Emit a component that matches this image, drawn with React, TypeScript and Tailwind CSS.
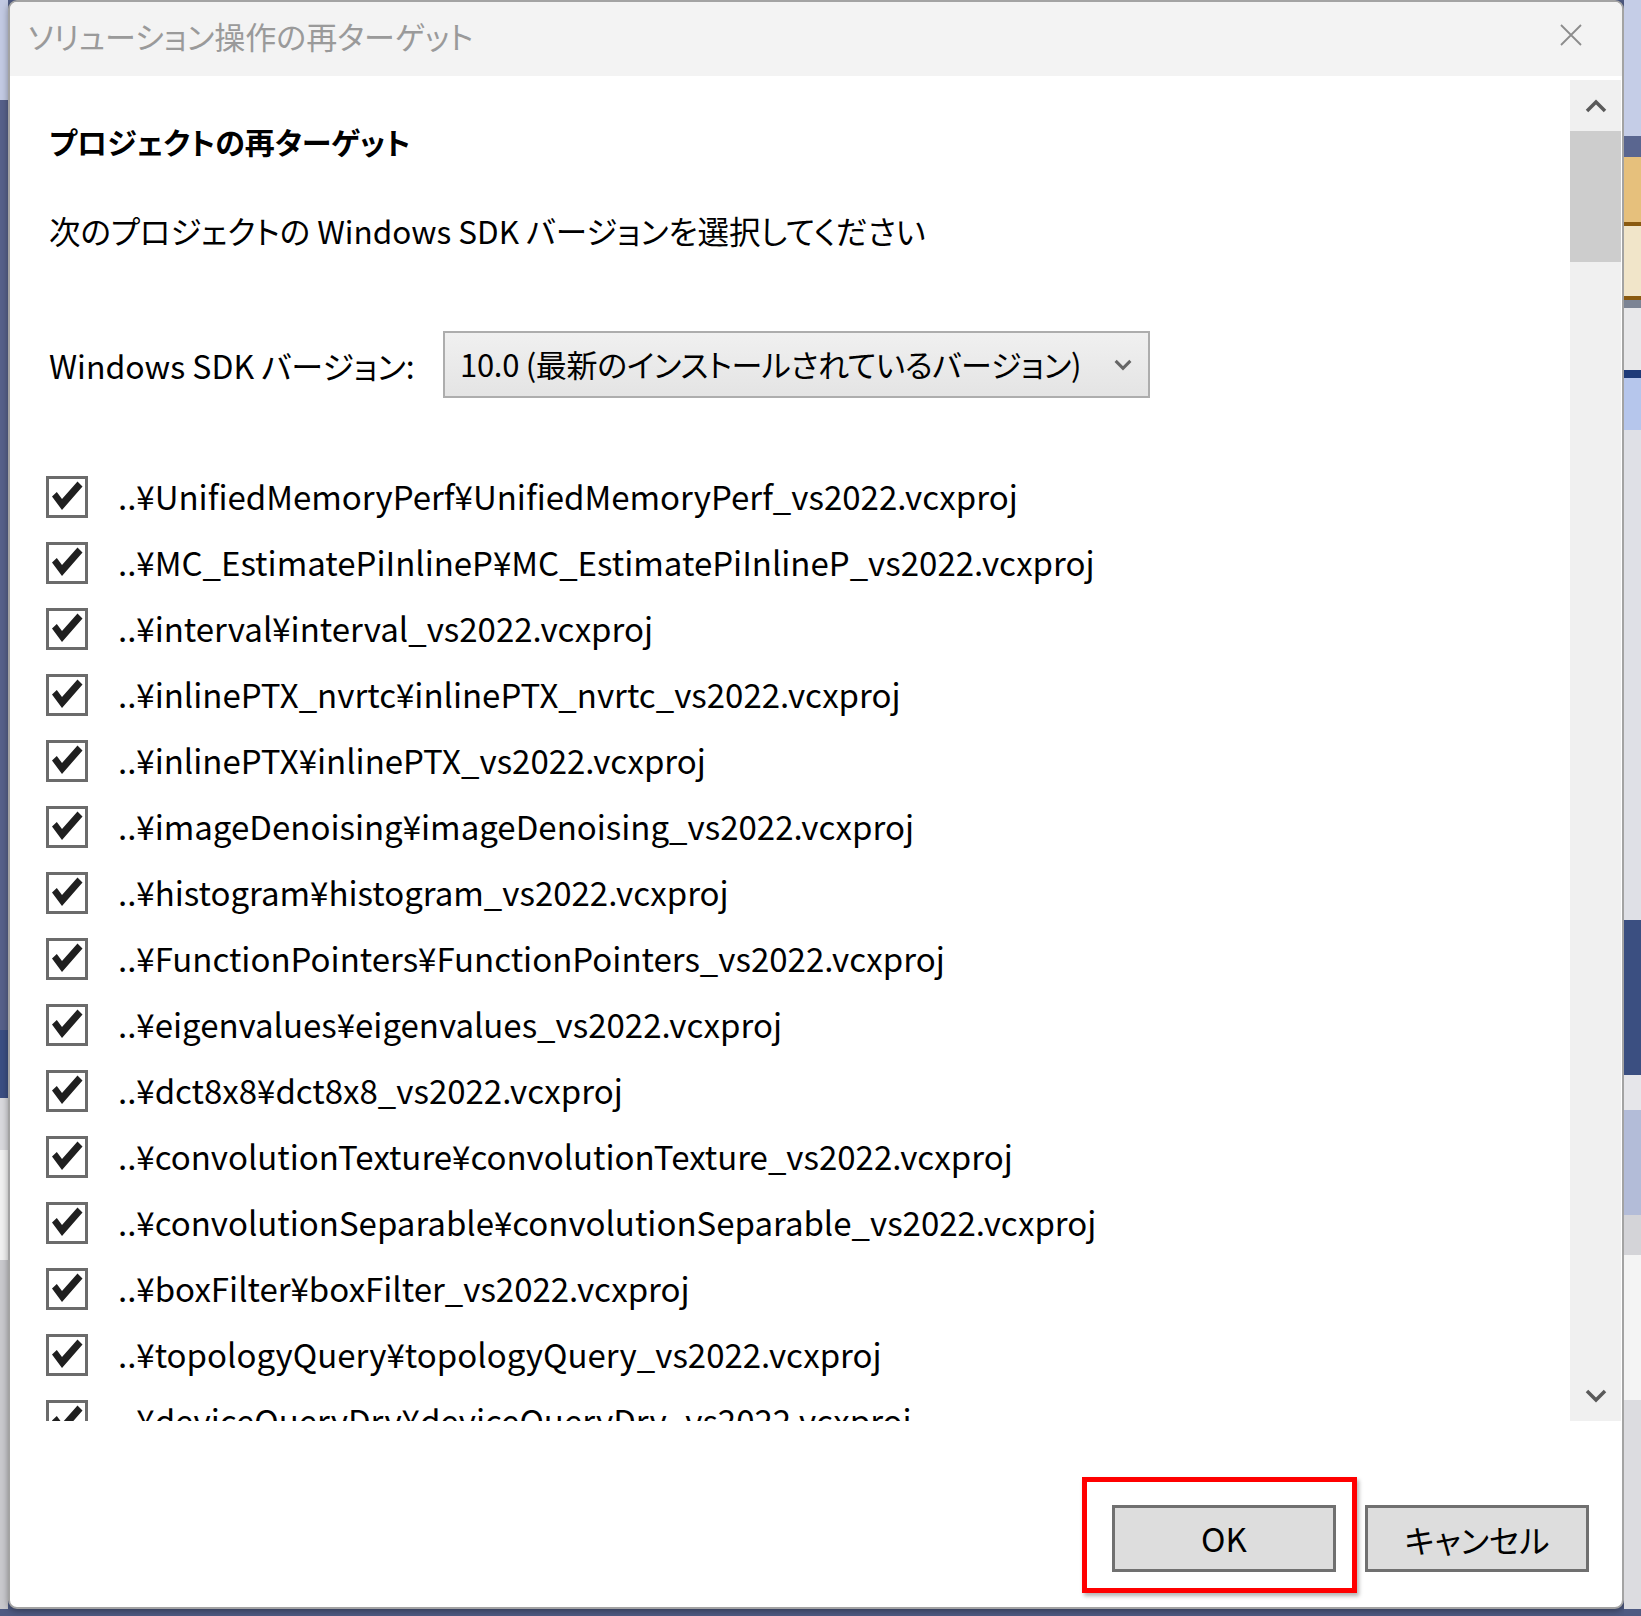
import React from 'react';

const files = [
    '..¥UnifiedMemoryPerf¥UnifiedMemoryPerf_vs2022.vcxproj',
    '..¥MC_EstimatePiInlineP¥MC_EstimatePiInlineP_vs2022.vcxproj',
    '..¥interval¥interval_vs2022.vcxproj',
    '..¥inlinePTX_nvrtc¥inlinePTX_nvrtc_vs2022.vcxproj',
    '..¥inlinePTX¥inlinePTX_vs2022.vcxproj',
    '..¥imageDenoising¥imageDenoising_vs2022.vcxproj',
    '..¥histogram¥histogram_vs2022.vcxproj',
    '..¥FunctionPointers¥FunctionPointers_vs2022.vcxproj',
    '..¥eigenvalues¥eigenvalues_vs2022.vcxproj',
    '..¥dct8x8¥dct8x8_vs2022.vcxproj',
    '..¥convolutionTexture¥convolutionTexture_vs2022.vcxproj',
    '..¥convolutionSeparable¥convolutionSeparable_vs2022.vcxproj',
    '..¥boxFilter¥boxFilter_vs2022.vcxproj',
    '..¥topologyQuery¥topologyQuery_vs2022.vcxproj',
    '..¥deviceQueryDrv¥deviceQueryDrv_vs2022.vcxproj',
];

const Chevron: React.FC<{ up?: boolean; className?: string; width?: string }> = ({ up, className, width = '3.5' }) => (
    <svg viewBox="0 0 22 16" className={className}>
        <path
            d={up ? 'M2 13 L11 4 L20 13' : 'M2 3 L11 12 L20 3'}
            fill="none"
            stroke="currentColor"
            strokeWidth={width}
        />
    </svg>
);

const CheckBox: React.FC = () => (
    <div className="w-[42px] h-[42px] border-[3px] border-[#6b6b6b] bg-white flex items-center justify-center shrink-0">
        <svg viewBox="0 0 34 34" className="w-[34px] h-[34px]">
            <path d="M2 16.5 L6.8 12 L12 19 L27.5 1.5 L32.5 6.5 L12 30 Z" fill="#1f1f1f" />
        </svg>
    </div>
);

const LeftStrip: React.FC = () => (
    <div className="w-[8px] flex flex-col shrink-0">
        <div className="h-[100px] bg-[#c2c9e2]" />
        <div className="h-[930px] bg-[#566089]" />
        <div className="h-[68px] bg-[#3b4e82]" />
        <div className="h-[52px] bg-[#d8d8dc]" />
        <div className="h-[110px] bg-[#f0f0f0]" />
        <div className="h-[349px] bg-[#c8c8cc]" />
        <div className="flex-1 bg-[#4e5a82]" />
    </div>
);

const RightStrip: React.FC = () => (
    <div className="w-[17px] flex flex-col shrink-0">
        <div className="h-[136px] bg-[#c5cde7]" />
        <div className="h-[21px] bg-[#5a6690]" />
        <div className="h-[65px] bg-[#e6c07c]" />
        <div className="h-[4px] bg-[#8a5a10]" />
        <div className="h-[70px] bg-[#f1e5c9]" />
        <div className="h-[4px] bg-[#8a5a10]" />
        <div className="h-[8px] bg-[#7c8494]" />
        <div className="h-[62px] bg-[#e8e8ea]" />
        <div className="h-[8px] bg-[#1e3a78]" />
        <div className="h-[52px] bg-[#b6c6ec]" />
        <div className="h-[490px] bg-[#dfe0e6]" />
        <div className="h-[155px] bg-[#3b4f81]" />
        <div className="h-[35px] bg-[#e6e6ea]" />
        <div className="h-[105px] bg-[#b3bcd8]" />
        <div className="h-[40px] bg-[#d4d4d8]" />
        <div className="h-[145px] bg-[#f4f4f4]" />
        <div className="h-[209px] bg-[#dcdce0]" />
        <div className="flex-1 bg-[#4e5a82]" />
    </div>
);

export default function App() {
    return (
        <div className="w-[1641px] h-[1616px] flex overflow-hidden bg-[#4e5a82] font-['Noto_Sans_CJK_JP',sans-serif] [font-feature-settings:'palt'] text-black">
            <LeftStrip />
            <div className="w-[1616px] h-[1609px] shrink-0 flex flex-col bg-white border-2 border-[#a3a3a3] rounded-[9px] overflow-hidden shadow-[0_2px_6px_rgba(0,0,0,0.35)]">
                {/* title bar */}
                <div className="h-[74px] bg-[#f3f3f3] flex items-center justify-between pl-[18px] pr-[40px] pb-[8px] shrink-0">
                    <span className="text-[31px] text-[#9a9a9a] leading-none whitespace-nowrap">ソリューション操作の再ターゲット</span>
                    <svg viewBox="0 0 22 22" className="w-[22px] h-[22px]">
                        <path d="M1 1 L21 21 M21 1 L1 21" stroke="#8c8c8c" strokeWidth="1.8" />
                    </svg>
                </div>

                {/* scrollable body */}
                <div className="h-[1341px] mt-[4px] flex shrink-0">
                    <div className="flex-1 overflow-hidden pl-[39px]">
                        <div className="h-[40px] mt-[41px] flex items-center text-[30px] font-bold whitespace-nowrap">プロジェクトの再ターゲット</div>
                        <div className="h-[40px] mt-[50px] flex items-center text-[31.5px] whitespace-nowrap">次のプロジェクトの Windows SDK バージョンを選択してください</div>
                        <div className="h-[67px] mt-[80px] flex items-center">
                            <div className="w-[394px] text-[32px] whitespace-nowrap">Windows SDK バージョン:</div>
                            <div className="w-[707px] h-[67px] border-2 border-[#adadad] bg-gradient-to-b from-[#f0f0f0] to-[#e4e4e4] flex items-center justify-between pl-[15px] pr-[16px]">
                                <span className="text-[31px] whitespace-nowrap tracking-[-0.3px]">10.0 (最新のインストールされているバージョン)</span>
                                <Chevron className="w-[18px] h-[14px] text-[#666]" width="3.8" />
                            </div>
                        </div>
                        <div className="mt-[66px] ml-[-3px] flex flex-col">
                            {files.map((f) => (
                                <div key={f} className="h-[66px] flex items-center gap-[30px] shrink-0">
                                    <CheckBox />
                                    <span className="text-[33px] whitespace-nowrap">{f}</span>
                                </div>
                            ))}
                        </div>
                    </div>
                    <div className="w-[51px] mr-[1px] bg-[#f0f0f0] flex flex-col shrink-0">
                        <div className="h-[51px] flex items-center justify-center">
                            <Chevron up className="w-[22px] h-[16px] text-[#5a5a5a]" />
                        </div>
                        <div className="h-[131px] bg-[#cdcdcd]" />
                        <div className="flex-1" />
                        <div className="h-[51px] flex items-center justify-center">
                            <Chevron className="w-[22px] h-[16px] text-[#5a5a5a]" />
                        </div>
                    </div>
                </div>

                {/* footer */}
                <div className="flex-1 flex justify-end items-start pt-[84px] pr-[33px] gap-[29px]">
                    <div className="relative">
                        <button className="w-[224px] h-[67px] bg-[#dddddd] border-[3px] border-[#707070] text-[33px] leading-none">OK</button>
                        <div className="absolute left-[-30px] top-[-28px] w-[275px] h-[116px] border-[5px] border-[#ff0000] shadow-[2px_3px_4px_rgba(0,0,0,0.3)] pointer-events-none" />
                    </div>
                    <button className="w-[224px] h-[67px] bg-[#dddddd] border-[3px] border-[#707070] text-[32px] leading-none">キャンセル</button>
                </div>
            </div>
            <RightStrip />
        </div>
    );
}
